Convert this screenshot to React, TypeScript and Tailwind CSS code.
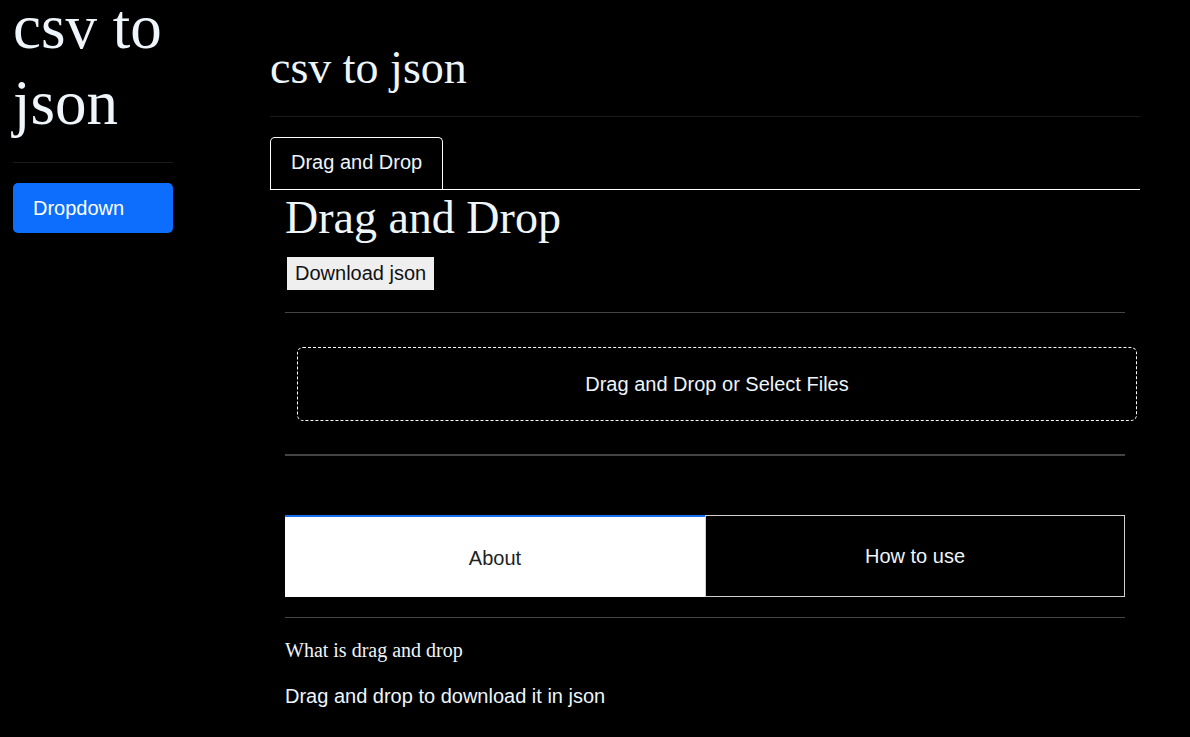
import React from 'react';

const serif = "font-['Liberation_Serif','Times_New_Roman',serif]";
const sans = "font-['Liberation_Sans',Arial,sans-serif]";

const Sidebar: React.FC = () => (
  <aside className="ml-[13px] w-[160px] shrink-0">
    <h1 className={`${serif} -mt-[10px] text-[63px] leading-[75.6px] text-[#eef5fb]`}>csv to json</h1>
    <hr className="mt-[21px] border-0 border-t border-[#1a1a1a]" />
    <button
      className={`${sans} mt-[20px] flex h-[50px] w-full items-center rounded-[5px] bg-[#0d6efd] px-5 text-[20px] text-white`}
    >
      Dropdown
    </button>
  </aside>
);

const App: React.FC = () => {
  return (
    <div className="min-h-screen overflow-hidden bg-black text-[#eef5fb]">
      <div className="flex">
        <Sidebar />
        <main className="ml-[97px] w-[870px] pt-[40px]">
          <h1 className={`${serif} text-[46px] leading-[55px]`}>csv to json</h1>
          <hr className="mt-[21px] border-0 border-t border-[#1a1a1a]" />

          {/* tab strip */}
          <div className="mt-[20px] flex border-b border-white">
            <div
              className={`${sans} flex h-[52px] items-center rounded-t-[5px] border-x border-t border-white px-5 pb-[3px] text-[20px]`}
            >
              Drag and Drop
            </div>
          </div>

          <section className="px-[15px]">
            <h1 className={`${serif} text-[46px] leading-[55px]`}>Drag and Drop</h1>
            <button
              className={`${sans} ml-[2px] mt-[12px] h-[33px] bg-[#efefef] px-2 text-[20px] leading-[33px] text-[#111]`}
            >
              Download json
            </button>
            <hr className="mt-[22px] border-0 border-t border-[#444]" />

            <div
              className={`${sans} ml-3 mt-[34px] flex h-[74px] w-full items-center justify-center rounded-[6px] border border-dashed border-white text-[20px]`}
            >
              Drag and Drop or Select Files
            </div>

            <hr className="mt-[33px] border-0 border-t-2 border-[#444]" />

            <div className={`${sans} mt-[59px] grid h-[82px] grid-cols-2 text-[20px]`}>
              <div className="flex items-center justify-center border-t-2 border-[#1a6ff0] bg-white pt-[1px] text-[#222]">
                About
              </div>
              <div className="flex items-center justify-center border border-[#cfcfcf] bg-black">How to use</div>
            </div>

            <hr className="mt-[20px] border-0 border-t border-[#444]" />

            <h4 className={`${serif} mt-[20px] text-[20px] leading-[24px]`}>What is drag and drop</h4>
            <p className={`${sans} mt-[19px] text-[20px] leading-[30px]`}>Drag and drop to download it in json</p>
          </section>
        </main>
      </div>
    </div>
  );
};

export default App;
